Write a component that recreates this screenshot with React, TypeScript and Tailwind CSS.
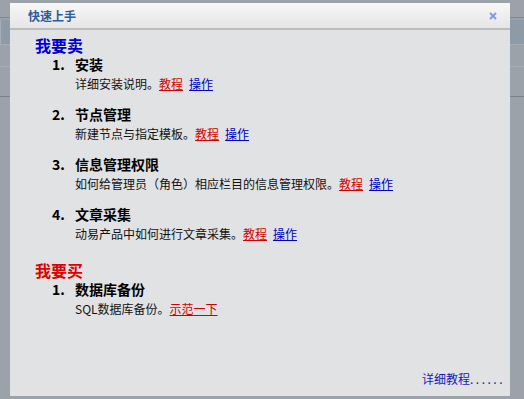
import React from "react";

type Item = {
  title: string;
  desc: string;
  links: { label: string; color: "red" | "blue" }[];
};

const sell: Item[] = [
  { title: "安装", desc: "详细安装说明。", links: [{ label: "教程", color: "red" }, { label: "操作", color: "blue" }] },
  { title: "节点管理", desc: "新建节点与指定模板。", links: [{ label: "教程", color: "red" }, { label: "操作", color: "blue" }] },
  { title: "信息管理权限", desc: "如何给管理员（角色）相应栏目的信息管理权限。", links: [{ label: "教程", color: "red" }, { label: "操作", color: "blue" }] },
  { title: "文章采集", desc: "动易产品中如何进行文章采集。", links: [{ label: "教程", color: "red" }, { label: "操作", color: "blue" }] },
];

const buy: Item[] = [
  { title: "数据库备份", desc: "SQL数据库备份。", links: [{ label: "示范一下", color: "red" }] },
];

function Section({ heading, color, items }: { heading: string; color: string; items: Item[] }) {
  return (
    <div>
      <h2 className={`h-[18px] text-[16px] leading-[18px] font-bold ${color}`}>{heading}</h2>
      <ol className="flex flex-col gap-[12px]">
        {items.map((item, i) => (
          <li key={item.title}>
            <div className="flex h-[20px] items-center text-[14px] leading-[20px] font-bold text-black">
              <span className="w-[40px] pl-[17px]">{i + 1}.</span>
              <span>{item.title}</span>
            </div>
            <p className="mt-[2px] h-[16px] pl-[40px] text-[12px] leading-[16px] text-[#111]">
              {item.desc}
              {item.links.map((l) => (
                <a
                  key={l.label}
                  href="#"
                  className={`mr-[6px] underline ${l.color === "red" ? "text-[#d40000]" : "text-[#0000c8]"}`}
                >
                  {l.label}
                </a>
              ))}
            </p>
          </li>
        ))}
      </ol>
    </div>
  );
}

export default function App() {
  return (
    <div
      className="relative h-[399px] w-[524px] overflow-hidden bg-[#9ba2aa]"
      style={{ fontFamily: '"Noto Sans CJK SC", "DejaVu Sans", sans-serif' }}
    >
      {/* page behind the overlay */}
      <div className="flex flex-col">
        <div className="h-[17px]" />
        <div className="h-px bg-[#80878f]" />
        <div className="h-[2px]" />
        <div className="h-[24px] border-l border-[#a6adb4] bg-[#8d9ba8]" />
        <div className="h-[23px] border-y border-[#a6adb4]" />
        <div className="h-[29px]" />
        <div className="h-px bg-[#7c848c]" />
      </div>

      {/* dialog */}
      <div className="absolute left-[10px] top-[3px] flex h-[393px] w-[500px] flex-col bg-[#e1e2e4]">
        <div className="flex h-[27px] items-center justify-between border-b-2 border-[#bcbcbc] bg-gradient-to-b from-[#f8f8f8] to-[#e5e5e5] pl-[18px] pr-[13px]">
          <span className="text-[12px] font-bold text-[#2d5b9b]">快速上手</span>
          <svg width="8" height="8" viewBox="0 0 8 8" className="text-[#7f9de3]">
            <path d="M1 1 L7 7 M7 1 L1 7" stroke="currentColor" strokeWidth="2" />
          </svg>
        </div>
        <div className="flex flex-1 flex-col pl-[25px] pr-[5px] pt-[6px]">
          <Section heading="我要卖" color="text-[#0000cc]" items={sell} />
          <div className="mt-[19px]">
            <Section heading="我要买" color="text-[#e00000]" items={buy} />
          </div>
          <div className="mb-[9px] mt-auto flex justify-end">
            <a href="#" className="text-[12px] leading-[16px] text-[#1a1ab0]">
              详细教程<span className="tracking-[2.5px]">......</span>
            </a>
          </div>
        </div>
      </div>
    </div>
  );
}
